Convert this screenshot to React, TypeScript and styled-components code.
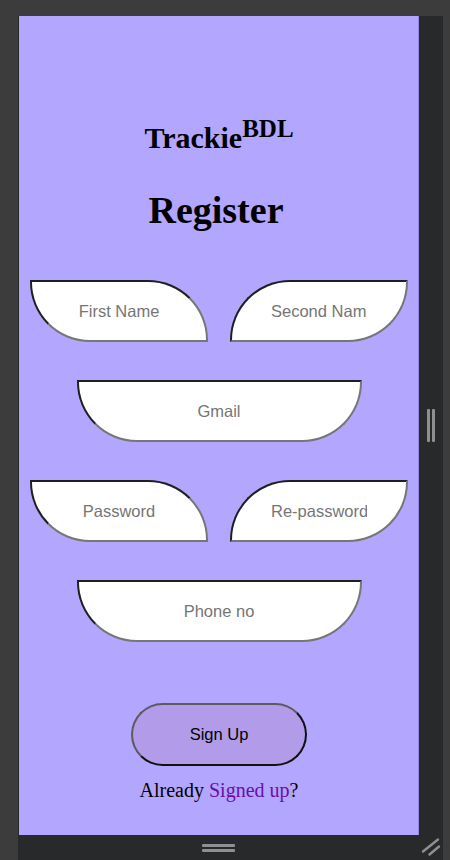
import React from 'react'
import styled, { createGlobalStyle } from 'styled-components'

const GlobalStyle = createGlobalStyle`
  html, body {
    margin: 0;
    padding: 0;
    background: #3c3c3c;
  }
  body {
    width: 450px;
    height: 860px;
    overflow: hidden;
  }
`

const Frame = styled.div`
  display: grid;
  grid-template-columns: 401px 24px;
  grid-template-rows: 819px 25px;
  width: 425px;
  margin: 16px 0 0 18px;
  background: #28292b;
`

const Screen = styled.main`
  display: flex;
  flex-direction: column;
  align-items: center;
  padding-top: 106px;
  border-left: 1px solid #262626;
  background: #b3a6ff;
  box-shadow: inset -1px 0 0 #9389dc;
  overflow: hidden;
`

const Brand = styled.h1`
  margin: 0;
  font-family: 'Liberation Serif', 'Times New Roman', serif;
  font-size: 30px;
  font-weight: 700;
  line-height: 32px;
  color: #000;
`

const BrandSup = styled.sup`
  font-size: 25px;
  line-height: 0;
`

const Heading = styled.h2`
  margin: 34px 0 48px;
  padding-right: 6px;
  font-family: 'Liberation Serif', 'Times New Roman', serif;
  font-size: 38px;
  font-weight: 700;
  line-height: 44px;
  color: #000;
`

const Form = styled.form`
  display: flex;
  flex-direction: column;
  align-items: center;
  gap: 38px;
`

const FieldRow = styled.div`
  display: flex;
  gap: 22px;
`

type Shape = 'left' | 'right' | 'wide'

const radius: Record<Shape, string> = {
  left: '0 60px 0 60px',
  right: '60px 0 60px 0',
  wide: '0 0 60px 60px',
}

const Field = styled.input<{ $shape: Shape }>`
  box-sizing: border-box;
  width: ${p => (p.$shape === 'wide' ? 285 : 178)}px;
  height: 62px;
  padding: 0 39px;
  border: 2px solid;
  border-color: #1f1f1f #767676 #767676 #1f1f1f;
  border-radius: ${p => radius[p.$shape]};
  background: #fff;
  font-family: 'Liberation Sans', Arial, sans-serif;
  font-size: 16.5px;
  text-align: center;
  color: #000;
  outline: none;

  &::placeholder {
    color: #757575;
  }
`

const SignUpButton = styled.button`
  box-sizing: border-box;
  width: 176px;
  height: 63px;
  margin-top: 61px;
  border: 2px solid;
  border-color: #5b5b5b #111 #111 #5b5b5b;
  border-radius: 32px;
  background: #b29ce9;
  font-family: 'Liberation Sans', Arial, sans-serif;
  font-size: 16.5px;
  color: #000;
  cursor: pointer;
`

const Footer = styled.p`
  margin: 13px 0 0;
  font-family: 'Liberation Serif', 'Times New Roman', serif;
  font-size: 20px;
  line-height: 23px;
  color: #000;
`

const FooterLink = styled.a`
  color: #6a0dad;
  text-decoration: none;
`

const SideBar = styled.div`
  display: flex;
  align-items: center;
  justify-content: center;
  gap: 2px;
`

const Grip = styled.span<{ $vertical?: boolean }>`
  display: block;
  width: ${p => (p.$vertical ? '3px' : '33px')};
  height: ${p => (p.$vertical ? '33px' : '3px')};
  border-radius: 1px;
  background: #8f8f8f;
`

const BottomBar = styled.div`
  display: flex;
  flex-direction: column;
  align-items: center;
  justify-content: center;
  gap: 2px;
`

const CornerCell = styled.div`
  display: flex;
`

const App: React.FC = () => {
  return (
    <>
      <GlobalStyle />
      <Frame>
        <Screen>
          <Brand>
            Trackie<BrandSup>BDL</BrandSup>
          </Brand>
          <Heading>Register</Heading>
          <Form onSubmit={e => e.preventDefault()}>
            <FieldRow>
              <Field $shape="left" placeholder="First Name" />
              <Field $shape="right" placeholder="Second Name" />
            </FieldRow>
            <Field $shape="wide" type="email" placeholder="Gmail" />
            <FieldRow>
              <Field $shape="left" type="password" placeholder="Password" />
              <Field $shape="right" type="password" placeholder="Re-password" />
            </FieldRow>
            <Field $shape="wide" type="tel" placeholder="Phone no" />
          </Form>
          <SignUpButton type="button">Sign Up</SignUpButton>
          <Footer>
            Already <FooterLink href="#">Signed up</FooterLink>?
          </Footer>
        </Screen>
        <SideBar>
          <Grip $vertical />
          <Grip $vertical />
        </SideBar>
        <BottomBar>
          <Grip />
          <Grip />
        </BottomBar>
        <CornerCell>
          <svg width="24" height="25" viewBox="0 0 24 25">
            <g stroke="#8f8f8f" strokeWidth="2.4" strokeLinecap="round">
              <line x1="4" y1="16.5" x2="19" y2="4.5" />
              <line x1="10.5" y1="19.5" x2="20" y2="11.5" />
            </g>
          </svg>
        </CornerCell>
      </Frame>
    </>
  )
}

export default App
